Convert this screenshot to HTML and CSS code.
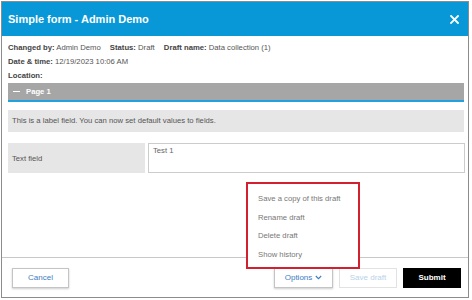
FILE: index.html
```html
<!DOCTYPE html>
<html lang="en">
<head>
  <meta charset="UTF-8">
  <meta name="viewport" content="width=device-width, initial-scale=1.0">
  <title>Simple form - Admin Demo</title>
  <link rel="stylesheet" href="styles.css">
</head>
<body>
  <div class="modal">
    <div class="modal-header">
      <h2>Simple form - Admin Demo</h2>
      <button class="close" aria-label="Close">
        <svg width="9" height="9" viewBox="0 0 9 9"><path d="M1 1L8 8M8 1L1 8" stroke="#fff" stroke-width="1.8" stroke-linecap="square"/></svg>
      </button>
    </div>

    <div class="modal-body">
      <div class="info">
        <div class="info-line">
          <span class="info-item"><b>Changed by:</b> Admin Demo</span>
          <span class="info-item"><b>Status:</b> Draft</span>
          <span class="info-item"><b>Draft name:</b> Data collection (1)</span>
        </div>
        <div class="info-line"><b>Date &amp; time:</b> 12/19/2023 10:06 AM</div>
        <div class="info-line"><b>Location:</b></div>
      </div>

      <div class="page-bar"><span class="dash"></span>Page 1</div>

      <div class="label-field">This is a label field. You can now set default values to fields.</div>

      <div class="field-row">
        <div class="field-label">Text field</div>
        <div class="field-input">Test 1</div>
      </div>
    </div>

    <div class="modal-footer">
      <button class="btn">Cancel</button>
      <div class="footer-right">
        <button class="btn">Options
          <svg width="7" height="5" viewBox="0 0 7 5"><path d="M0.8 1L3.5 3.7L6.2 1" fill="none" stroke="#3b7dc4" stroke-width="1.1"/></svg>
        </button>
        <button class="btn btn-disabled">Save draft</button>
        <button class="btn btn-submit">Submit</button>
      </div>
    </div>

    <ul class="options-menu">
      <li>Save a copy of this draft</li>
      <li>Rename draft</li>
      <li>Delete draft</li>
      <li>Show history</li>
    </ul>
  </div>
</body>
</html>
```

FILE: styles.css
```css
body {
  margin: 0;
  font-family: 'Liberation Sans', Arial, sans-serif;
  background: #fff;
  color: #444;
}
.modal {
  position: relative;
  box-sizing: border-box;
  width: 468px;
  height: 297px;
  margin: 1px 0 0 1px;
  border: 1px solid #8c8c8c;
  display: flex;
  flex-direction: column;
}
.modal-header {
  height: 34px;
  background: #0898d8;
  display: flex;
  align-items: center;
  justify-content: space-between;
  padding: 0 9px 0 6px;
}
.modal-header h2 {
  margin: 0;
  color: #fff;
  font-size: 11px;
  font-weight: bold;
}
.close {
  background: none;
  border: none;
  padding: 0;
  display: flex;
}
.modal-body {
  flex: 1;
  padding: 5px 4px 0 6px;
  font-size: 7.7px;
}
.info-line {
  height: 14px;
  line-height: 14px;
  color: #555;
}
.info-line b {
  color: #444;
}
.info-item {
  margin-right: 7px;
}
.page-bar {
  height: 17px;
  background: #a6a6a6;
  border-bottom: 2px solid #1fa2df;
  color: #fff;
  font-weight: bold;
  display: flex;
  align-items: center;
  padding-left: 5px;
}
.dash {
  width: 7px;
  height: 1.5px;
  background: #fff;
  margin-right: 6px;
}
.label-field {
  margin-top: 8px;
  height: 22px;
  line-height: 22px;
  background: #e6e6e6;
  padding-left: 4px;
  color: #555;
}
.field-row {
  margin-top: 11px;
  display: flex;
  gap: 3px;
  height: 30px;
}
.field-label {
  width: 133px;
  background: #e6e6e6;
  padding-left: 4px;
  display: flex;
  align-items: center;
  color: #555;
}
.field-input {
  flex: 1;
  box-sizing: border-box;
  border: 1px solid #ccc;
  padding: 2px 4px;
  color: #666;
  margin-right: -1px;
}
.modal-footer {
  height: 39px;
  border-top: 1px solid #c8c8c8;
  display: flex;
  align-items: center;
  justify-content: space-between;
  padding: 0 7px 0 10px;
}
.footer-right {
  display: flex;
  gap: 6px;
}
.btn {
  box-sizing: border-box;
  height: 20px;
  width: 58px;
  font-family: 'Liberation Sans', Arial, sans-serif;
  font-size: 8px;
  color: #3b7dc4;
  background: #fff;
  border: 1px solid #c4c4c4;
  box-shadow: 0 1px 2px rgba(0, 0, 0, 0.2);
  display: flex;
  align-items: center;
  justify-content: center;
  gap: 3px;
  padding: 0;
}
.btn:first-child {
  width: 57px;
}
.footer-right .btn:first-child {
  width: 59px;
}
.btn-disabled {
  color: #b9d2ea;
  border-color: #e2e2e2;
  box-shadow: none;
}
.btn-submit {
  background: #000;
  color: #fff;
  font-weight: bold;
  border-color: #000;
  box-shadow: none;
}
.options-menu {
  position: absolute;
  left: 244px;
  top: 180px;
  width: 114px;
  height: 87px;
  box-sizing: border-box;
  margin: 0;
  padding: 8px 0 0 10px;
  list-style: none;
  background: #fff;
  border: 2px solid #d3202f;
  font-size: 7.7px;
  color: #777;
}
.options-menu li {
  height: 18.6px;
  line-height: 14px;
}
```
